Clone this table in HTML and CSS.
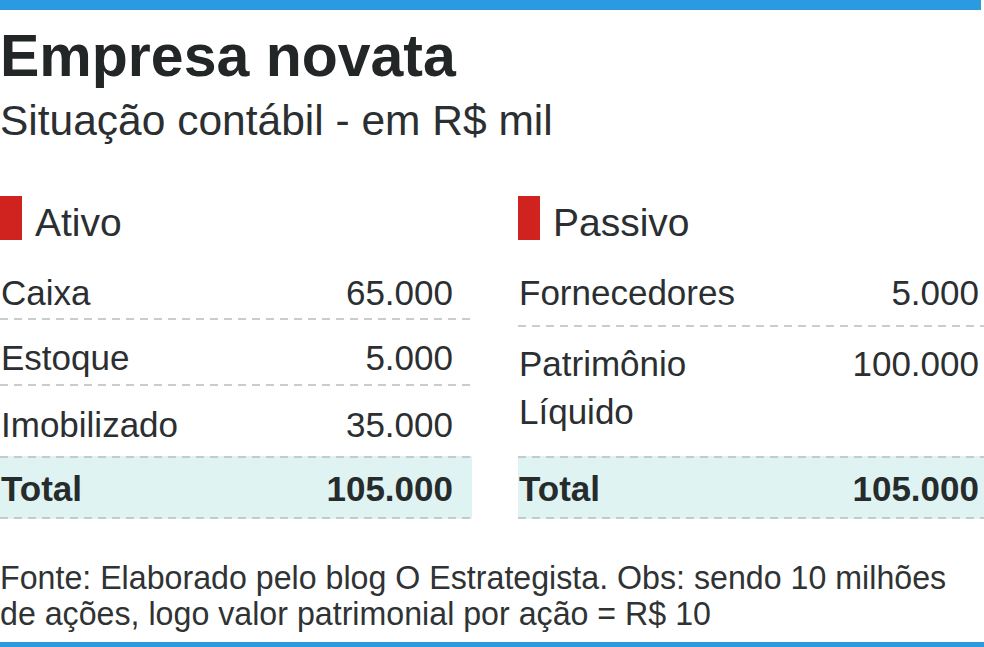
FILE: index.html
```html
<!DOCTYPE html>
<html lang="pt-BR">
<head>
<meta charset="utf-8">
<title>Empresa novata</title>
<link rel="stylesheet" href="styles.css">
</head>
<body>
<div class="page">
  <div class="topbar"></div>
  <h1 class="title">Empresa novata</h1>
  <p class="subtitle">Situação contábil - em R$ mil</p>

  <div class="tables">
    <section class="col col-left">
      <div class="head"><span class="mark"></span><span class="head-label">Ativo</span></div>
      <div class="row r1 dash"><span>Caixa</span><span>65.000</span></div>
      <div class="row r2 dash"><span>Estoque</span><span>5.000</span></div>
      <div class="row r3"><span>Imobilizado</span><span>35.000</span></div>
      <div class="row total"><span>Total</span><span>105.000</span></div>
    </section>
    <section class="col col-right">
      <div class="head"><span class="mark"></span><span class="head-label">Passivo</span></div>
      <div class="row r1b dash"><span>Fornecedores</span><span>5.000</span></div>
      <div class="row r2b"><span class="multi">Patrimônio<br>Líquido</span><span class="val-top">100.000</span></div>
      <div class="row total"><span>Total</span><span>105.000</span></div>
    </section>
  </div>

  <p class="note">Fonte: Elaborado pelo blog O Estrategista. Obs: sendo 10 milhões<br>de ações, logo valor patrimonial por ação = R$ 10</p>
  <div class="bottombar"></div>
</div>
</body>
</html>
```

FILE: styles.css
```css
html, body {
  margin: 0;
  padding: 0;
  background: #ffffff;
}

body {
  font-family: "Liberation Sans", Arial, sans-serif;
  color: #2b2f31;
}

.page {
  width: 984px;
  height: 647px;
  overflow: hidden;
  display: flex;
  flex-direction: column;
}

.topbar {
  width: 981px;
  height: 10px;
  background: #2a9be0;
  flex: none;
}

.title {
  margin: 13px 0 0 0;
  font-size: 59px;
  line-height: 66px;
  font-weight: bold;
  color: #222627;
}

.subtitle {
  margin: 9px 0 0 0;
  font-size: 42.5px;
  line-height: 46px;
  font-weight: normal;
  color: #2b2f31;
}

.tables {
  display: flex;
  gap: 46px;
  margin-top: 52px;
}

.col {
  display: flex;
  flex-direction: column;
}

.col-left {
  width: 472px;
}

.col-left .row {
  padding-right: 19px;
}

.col-right {
  width: 466px;
}

.col-right .row {
  padding-right: 5px;
}

.head {
  display: flex;
  align-items: flex-start;
  height: 44px;
}

.mark {
  width: 22px;
  height: 44px;
  background: #d0231f;
  flex: none;
}

.head-label {
  margin: 5px 0 0 13px;
  font-size: 39px;
  line-height: 44px;
}

.row {
  display: flex;
  justify-content: space-between;
  align-items: flex-start;
  font-size: 35px;
  line-height: 38px;
  padding-left: 1px;
}

.dash {
  background-image: repeating-linear-gradient(to right, #c7cece 0 8px, transparent 8px 14px);
  background-size: 100% 2px;
  background-position: left bottom;
  background-repeat: no-repeat;
}

.r1 { padding-top: 34px; padding-bottom: 8px; }
.r2 { padding-top: 19px; padding-bottom: 9px; }
.r3 { padding-top: 20px; padding-bottom: 12px; }

.r1b { padding-top: 34px; padding-bottom: 15px; }
.r2b { padding-top: 13px; padding-bottom: 20px; }

.multi {
  line-height: 48px;
}

.val-top {
  line-height: 48px;
}

.total {
  font-weight: bold;
  padding-top: 14px;
  padding-bottom: 11px;
  background-color: #dff3f3;
  background-image:
    repeating-linear-gradient(to right, #c3cbcb 0 8px, transparent 8px 14px),
    repeating-linear-gradient(to right, #c3cbcb 0 8px, transparent 8px 14px);
  background-size: 100% 2px, 100% 2px;
  background-position: left top, left bottom;
  background-repeat: no-repeat;
  color: #262b2c;
}

.note {
  margin: 41px 0 0 0;
  font-size: 33px;
  line-height: 36px;
  color: #2f3334;
  white-space: nowrap;
  transform: scaleX(0.975);
  transform-origin: left top;
}

.bottombar {
  margin-top: auto;
  height: 5px;
  background: #2a9be0;
  flex: none;
}
```
